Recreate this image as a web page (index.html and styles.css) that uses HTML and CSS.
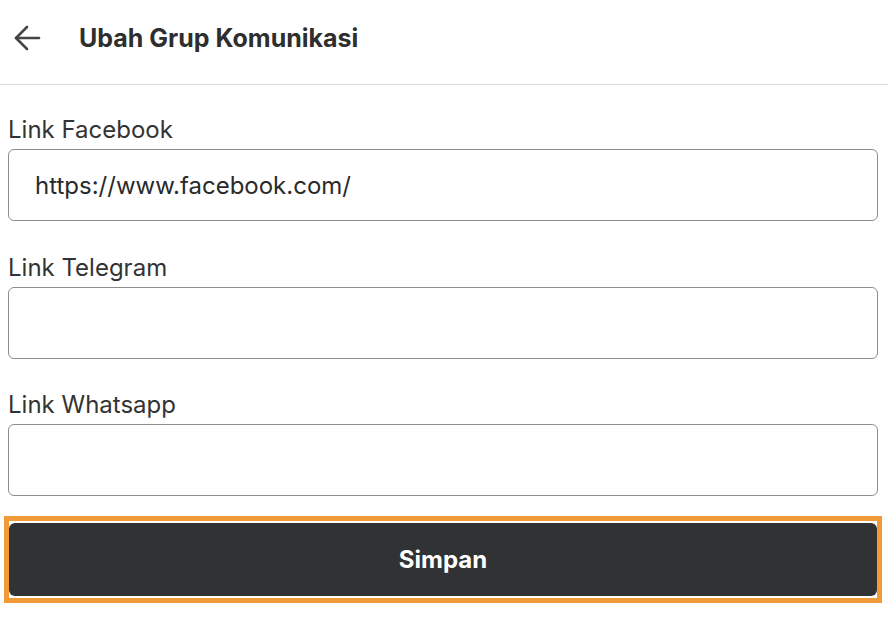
FILE: index.html
```html
<!DOCTYPE html>
<html lang="id">
<head>
<meta charset="utf-8">
<title>Ubah Grup Komunikasi</title>
<link rel="stylesheet" href="styles.css">
</head>
<body>
<header class="topbar">
  <button class="back" aria-label="Kembali">
    <svg width="28" height="28" viewBox="0 0 28 28" fill="none" stroke="#454545" stroke-width="2.6" stroke-linecap="round" stroke-linejoin="round">
      <path d="M26 14H3"/>
      <path d="M14 3L3 14l11 11"/>
    </svg>
  </button>
  <h1 class="title">Ubah Grup Komunikasi</h1>
</header>
<main class="form">
  <div class="field">
    <label class="label">Link Facebook</label>
    <div class="input">https://www.facebook.com/</div>
  </div>
  <div class="field">
    <label class="label">Link Telegram</label>
    <div class="input"></div>
  </div>
  <div class="field">
    <label class="label">Link Whatsapp</label>
    <div class="input"></div>
  </div>
  <div class="focus-ring">
    <button class="submit">Simpan</button>
  </div>
</main>
</body>
</html>
```
FILE: styles.css
```css
* { box-sizing: border-box; }
html, body { margin: 0; padding: 0; background: #fff; }
body {
  font-family: Inter, "Noto Sans", sans-serif;
  color: #333;
  width: 888px;
}
.topbar {
  height: 85px;
  border-bottom: 1px solid #dcdcdc;
  display: flex;
  align-items: center;
  padding-left: 13px;
}
.back {
  border: 0;
  background: none;
  padding: 0;
  width: 28px;
  height: 28px;
  display: flex;
  margin-top: -8px;
}
.title {
  margin: -8px 0 0 38px;
  font-size: 25px;
  font-weight: 700;
  color: #2e2e2e;
}
.form {
  padding: 0 10px 0 8px;
  display: flex;
  flex-direction: column;
}
.field {
  display: flex;
  flex-direction: column;
  margin-top: 31.5px;
}
.field:first-child { margin-top: 30px; }
.label {
  font-size: 24px;
  line-height: 30px;
  color: #333;
  margin-bottom: 4px;
}
.input {
  height: 72px;
  border: 1px solid #8e8e8e;
  border-radius: 6px;
  padding-left: 26px;
  display: flex;
  align-items: center;
  font-size: 24px;
  color: #2a2a2a;
}
.focus-ring {
  margin: 20px -4px 0 -4px;
  border: 5px solid #f09a38;
  padding: 2px 0;
  background: #fff;
}
.submit {
  display: block;
  width: 100%;
  height: 73px;
  border: 0;
  border-radius: 6px;
  background: #313234;
  color: #fff;
  font-family: Inter, "Noto Sans", sans-serif;
  font-size: 24px;
  font-weight: 700;
}
```
